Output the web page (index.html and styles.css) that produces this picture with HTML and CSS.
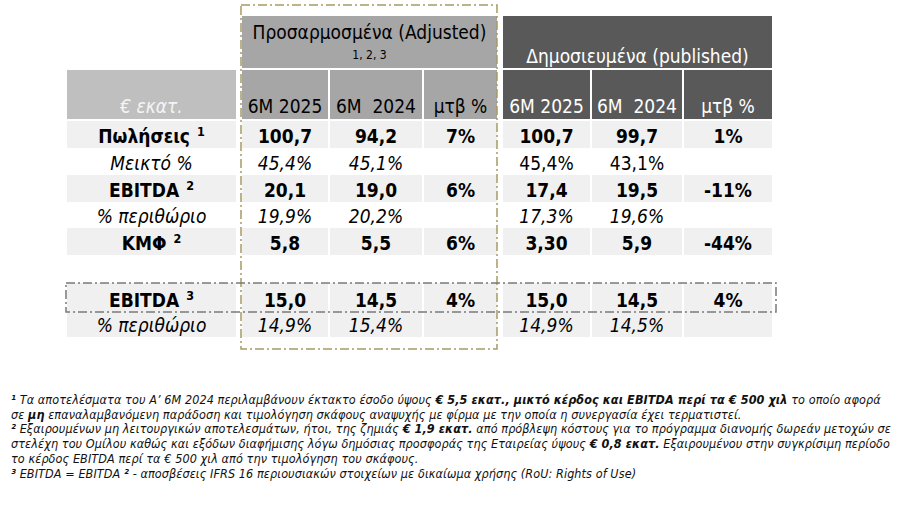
FILE: index.html
```html
<!DOCTYPE html>
<html lang="el">
<head>
<meta charset="utf-8">
<title>Αποτελέσματα 6M 2025</title>
<link rel="stylesheet" href="styles.css">
</head>
<body>
<div class="page">
  <div class="table">
    <div class="row hrow1">
      <div class="lab"></div>
      <div class="grp adj-h"><span class="adj-title">Προσαρμοσμένα (Adjusted)</span><span class="sub">1, 2, 3</span></div>
      <div class="grp pub-h">Δημοσιευμένα (published)</div>
    </div>
    <div class="row hrow2">
      <div class="lab lab-h">€ εκατ.</div>
      <div class="grp">
        <div class="c c1 adj">6M 2025</div>
        <div class="c c2 adj">6M&nbsp; 2024</div>
        <div class="c c3 adj">μτβ %</div>
      </div>
      <div class="grp">
        <div class="c p1 pub">6M 2025</div>
        <div class="c p2 pub">6M&nbsp; 2024</div>
        <div class="c p3 pub">μτβ %</div>
      </div>
    </div>

    <div class="row drow band bold">
      <div class="lab"><span>Πωλήσεις <sup class="fn">1</sup></span></div>
      <div class="grp"><div class="c c1">100,7</div><div class="c c2">94,2</div><div class="c c3">7%</div></div>
      <div class="grp"><div class="c p1">100,7</div><div class="c p2">99,7</div><div class="c p3">1%</div></div>
    </div>
    <div class="row drow ital">
      <div class="lab"><span>Μεικτό %</span></div>
      <div class="grp"><div class="c c1">45,4%</div><div class="c c2">45,1%</div><div class="c c3"></div></div>
      <div class="grp up"><div class="c p1">45,4%</div><div class="c p2">43,1%</div><div class="c p3"></div></div>
    </div>
    <div class="row drow band bold">
      <div class="lab"><span>EBITDA <sup class="fn">2</sup></span></div>
      <div class="grp"><div class="c c1">20,1</div><div class="c c2">19,0</div><div class="c c3">6%</div></div>
      <div class="grp"><div class="c p1">17,4</div><div class="c p2">19,5</div><div class="c p3">-11%</div></div>
    </div>
    <div class="row drow ital short">
      <div class="lab"><span>% περιθώριο</span></div>
      <div class="grp"><div class="c c1">19,9%</div><div class="c c2">20,2%</div><div class="c c3"></div></div>
      <div class="grp"><div class="c p1">17,3%</div><div class="c p2">19,6%</div><div class="c p3"></div></div>
    </div>
    <div class="row drow band bold">
      <div class="lab"><span>ΚΜΦ <sup class="fn">2</sup></span></div>
      <div class="grp"><div class="c c1">5,8</div><div class="c c2">5,5</div><div class="c c3">6%</div></div>
      <div class="grp"><div class="c p1">3,30</div><div class="c p2">5,9</div><div class="c p3">-44%</div></div>
    </div>
    <div class="row spacer"></div>
    <div class="row drow band bold tall">
      <div class="lab"><span>EBITDA <sup class="fn">3</sup></span></div>
      <div class="grp"><div class="c c1">15,0</div><div class="c c2">14,5</div><div class="c c3">4%</div></div>
      <div class="grp"><div class="c p1">15,0</div><div class="c p2">14,5</div><div class="c p3">4%</div></div>
    </div>
    <div class="row drow band ital last">
      <div class="lab"><span>% περιθώριο</span></div>
      <div class="grp"><div class="c c1">14,9%</div><div class="c c2">15,4%</div><div class="c c3"></div></div>
      <div class="grp"><div class="c p1">14,9%</div><div class="c p2">14,5%</div><div class="c p3"></div></div>
    </div>
  </div>

  <svg class="box-adj" width="258" height="346" viewBox="0 0 258 346">
    <rect x="1" y="1" width="256" height="344" fill="none" stroke="#a89b62" stroke-width="1.5" stroke-dasharray="9 3 2 3"/>
  </svg>
  <svg class="box-ebitda" width="712" height="31" viewBox="0 0 712 31">
    <rect x="1" y="1" width="710" height="29" fill="none" stroke="#7a7a7a" stroke-width="1.5" stroke-dasharray="9 3 2 3"/>
  </svg>

  <div class="notes">
    <div class="line"><b>¹</b> Τα αποτελέσματα του Α’ 6M 2024 περιλαμβάνουν έκτακτο έσοδο ύψους <b>€ 5,5 εκατ., μικτό κέρδος και EBITDA περί τα € 500 χιλ</b> το οποίο αφορά</div>
    <div class="line">σε <b>μη</b> επαναλαμβανόμενη παράδοση και τιμολόγηση σκάφους αναψυχής με φίρμα με την οποία η συνεργασία έχει τερματιστεί.</div>
    <div class="line"><b>²</b> Εξαιρουμένων μη λειτουργικών αποτελεσμάτων, ήτοι, της ζημιάς <b>€ 1,9 εκατ.</b> από πρόβλεψη κόστους για το πρόγραμμα διανομής δωρεάν μετοχών σε</div>
    <div class="line">στελέχη του Ομίλου καθώς και εξόδων διαφήμισης λόγω δημόσιας προσφοράς της Εταιρείας ύψους <b>€ 0,8 εκατ.</b> Εξαιρουμένου στην συγκρίσιμη περίοδο</div>
    <div class="line">το κέρδος EBITDA περί τα € 500 χιλ από την τιμολόγηση του σκάφους.</div>
    <div class="line"><b>³</b> EBITDA = EBITDA <b>²</b> - αποσβέσεις IFRS 16 περιουσιακών στοιχείων με δικαίωμα χρήσης (RoU: Rights of Use)</div>
  </div>
</div>
</body>
</html>
```

FILE: styles.css
```css
html, body {
  margin: 0;
  padding: 0;
  background: #ffffff;
}
body {
  font-family: "DejaVu Sans Condensed", "DejaVu Sans", sans-serif;
  font-stretch: condensed;
  color: #000;
  width: 900px;
  height: 505px;
  overflow: hidden;
}
.page {
  position: relative;
  width: 900px;
  height: 505px;
}
.table {
  padding: 16px 0 0 67px;
  display: flex;
  flex-direction: column;
}
.row {
  display: flex;
  gap: 6px;
}
.lab {
  width: 169px;
  flex: none;
  display: flex;
  align-items: flex-end;
  justify-content: center;
  box-sizing: border-box;
  white-space: nowrap;
}
.grp {
  display: flex;
  gap: 2px;
}
.c {
  flex: none;
  display: flex;
  align-items: flex-end;
  justify-content: center;
  box-sizing: border-box;
  white-space: nowrap;
}
.c1 { width: 86px; }
.c2 { width: 92px; }
.c3 { width: 73px; }
.p1 { width: 87px; }
.p2 { width: 90px; }
.p3 { width: 88px; }

/* header row 1 */
.hrow1 {
  height: 52px;
  margin-bottom: 2px;
}
.adj-h {
  width: 255px;
  background: #a6a6a6;
  flex-direction: column;
  align-items: center;
  font-size: 19px;
  padding-top: 5px;
  box-sizing: border-box;
}
.adj-title {
  line-height: 22px;
}
.sub {
  font-size: 12px;
  line-height: 14px;
  margin-top: 3px;
}
.pub-h {
  width: 269px;
  background: #595959;
  color: #ffffff;
  font-size: 19px;
  align-items: flex-end;
  justify-content: center;
  padding-bottom: 1px;
  box-sizing: border-box;
}

/* header row 2 */
.hrow2 {
  height: 49px;
  margin-bottom: 2px;
  font-size: 19px;
}
.hrow2 .c, .hrow2 .lab {
  padding-bottom: 2px;
}
.lab-h {
  background: #bfbfbf;
  color: #f4f4f4;
  font-style: italic;
}
.adj { background: #a6a6a6; }
.pub { background: #595959; color: #ffffff; }

/* data rows */
.drow {
  height: 27px;
  font-size: 19px;
}
.drow.short { height: 26px; }
.drow.tall { height: 29px; }
.drow.last { height: 25px; }
.drow .lab, .drow .c {
  padding-bottom: 1px;
}
.band .lab, .band .c {
  background: #f0f0f0;
}
.bold { font-weight: bold; }
.ital { font-style: italic; }
.ital .up .c { font-style: normal; }
.spacer { height: 28px; }
.fn {
  font-size: 12.5px;
  font-weight: bold;
  vertical-align: 7px;
  line-height: 0;
  margin-left: 1px;
}

/* dashed overlays */
.box-adj {
  position: absolute;
  left: 240px;
  top: 4px;
}
.box-ebitda {
  position: absolute;
  left: 65px;
  top: 282px;
}

/* footnotes */
.notes {
  margin: 56px 0 0 11px;
  font-size: 12.5px;
  letter-spacing: 0.09px;
  line-height: 14.7px;
  font-style: italic;
  color: #111;
}
.line {
  white-space: nowrap;
}
.notes b {
  font-weight: bold;
}
```
